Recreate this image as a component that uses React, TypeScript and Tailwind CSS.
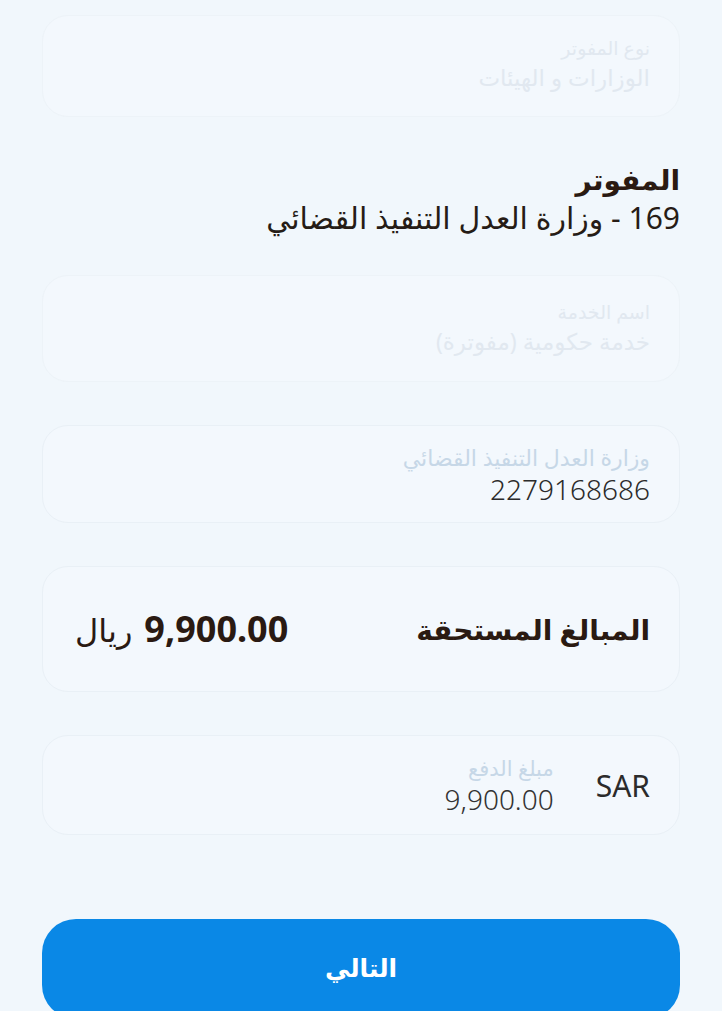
export default function App() {
  const font = { fontFamily: '"Noto Sans", "DejaVu Sans", sans-serif' };
  return (
    <div dir="rtl" style={font} className="min-h-[1011px] w-[722px] overflow-hidden bg-[#f1f7fc]">
      <div className="mx-[42px] pt-[15px]">
        <div className="flex h-[102px] flex-col rounded-[26px] border border-[#edf3f8] bg-[#f3f8fd] px-[29px] pt-[18px]">
          <p className="text-[19px] leading-[28px] text-[#e1e8f0]">نوع المفوتر</p>
          <p className="text-[23px] leading-[30px] text-[#e1e8f0]">الوزارات و الهيئات</p>
        </div>

        <div className="mt-[43px]">
          <p className="text-[28px] font-bold leading-[38px] text-[#2a1a12]">المفوتر</p>
          <p className="text-[30px] leading-[40px] text-[#261c16]">169 - وزارة العدل التنفيذ القضائي</p>
        </div>

        <div className="mt-[37px] flex h-[107px] flex-col rounded-[26px] border border-[#edf3f8] bg-[#f3f8fd] px-[29px] pt-[22px]">
          <p className="text-[19px] leading-[28px] text-[#e1e8f0]">اسم الخدمة</p>
          <p className="text-[23px] leading-[30px] text-[#e1e8f0]">خدمة حكومية (مفوترة)</p>
        </div>

        <div className="mt-[43px] flex h-[98px] flex-col justify-center rounded-[26px] border border-[#e9f0f6] bg-[#f3f8fd] px-[29px]">
          <p className="text-[22px] leading-[30px] text-[#c6d7e7]">وزارة العدل التنفيذ القضائي</p>
          <p className="text-[28px] font-light leading-[34px] text-[#2b2b2b]">2279168686</p>
        </div>

        <div className="mt-[43px] flex h-[126px] items-center justify-between rounded-[26px] border border-[#e9f0f6] bg-[#f3f8fd] pl-[32px] pr-[29px]">
          <p className="text-[28px] font-semibold text-[#2a1a12]">المبالغ المستحقة</p>
          <p className="flex items-baseline gap-[12px] text-[32px] text-[#2a1a12]">
            <span className="text-[36px] font-bold">9,900.00</span>
            <span>ريال</span>
          </p>
        </div>

        <div className="mt-[43px] flex h-[100px] items-center gap-[42px] rounded-[26px] border border-[#e9f0f6] bg-[#f3f8fd] px-[29px]">
          <p className="text-[30px] text-[#2b2b2b]">SAR</p>
          <div className="flex flex-col">
            <p className="text-[21px] leading-[28px] text-[#c6d7e7]">مبلغ الدفع</p>
            <p className="text-[28px] font-light leading-[34px] text-[#333333]">9,900.00</p>
          </div>
        </div>

        <button className="mt-[84px] flex h-[100px] w-full items-center justify-center rounded-[34px] bg-[#0a88e6] pb-[2px] text-[25px] font-bold text-white">
          التالي
        </button>
      </div>
    </div>
  );
}
